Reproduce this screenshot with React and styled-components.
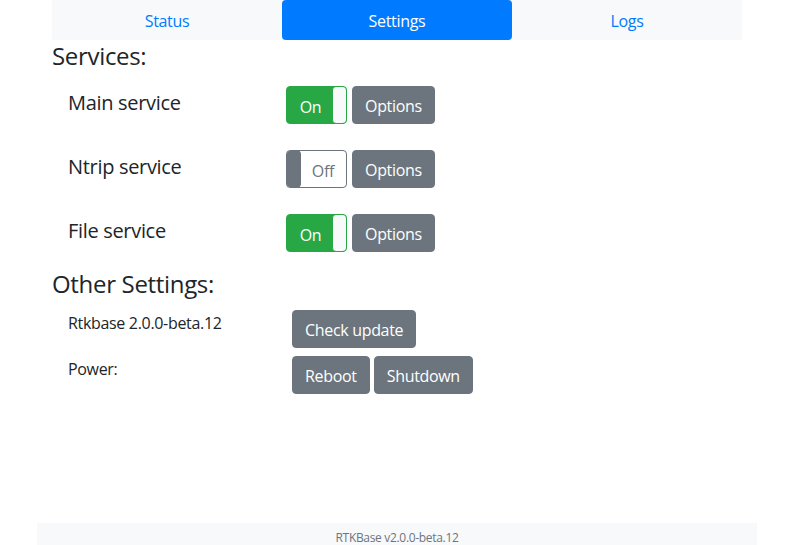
import React from "react";
import styled, { createGlobalStyle, css } from "styled-components";

const Global = createGlobalStyle`
  html, body { margin: 0; padding: 0; overflow: hidden; }
  body {
    font-family: "Segoe UI", "Open Sans", "Noto Sans", sans-serif;
    font-size: 16px;
    line-height: 1.5;
    letter-spacing: -0.02em;
    color: #212529;
    background: #fff;
  }
  * { box-sizing: border-box; }
`;

const Page = styled.div`
  height: 545px;
  display: flex;
  flex-direction: column;
  align-items: center;
`;

const Container = styled.div`
  width: 720px;
  padding: 0 15px;
  flex: 1;
`;

const Nav = styled.nav`
  display: flex;
  background: #f8f9fa;
`;

const NavLink = styled.a`
  flex: 1;
  text-align: center;
  padding: 9px 16px 7px;
  line-height: 24px;
  border-radius: 4px;
  color: ${(p) => (p.$active ? "#fff" : "#007bff")};
  background: ${(p) => (p.$active ? "#007bff" : "transparent")};
  cursor: pointer;
`;

const H4 = styled.h4`
  font-size: 24px;
  font-weight: 400;
  line-height: 1.2;
  padding-top: 2px;
  margin: ${(p) => p.$mt || 0}px 0 6px 0;
`;

const Services = styled.div`
  padding-top: 9px;
`;

const ServiceRow = styled.div`
  display: flex;
  align-items: flex-start;
  margin-top: ${(p) => p.$mt}px;
`;

const ServiceLabel = styled.h5`
  width: 218px;
  margin: 5px 0 0 16px;
  font-size: 20px;
  font-weight: 400;
  line-height: 1.2;
`;

const Btn = styled.button`
  font-family: inherit;
  font-size: 16px;
  letter-spacing: -0.02em;
  line-height: 24px;
  padding: 7px 12px 5px;
  border: 1px solid #6c757d;
  background: #6c757d;
  color: #fff;
  border-radius: 4px;
  cursor: pointer;
`;

const Toggle = styled.div`
  position: relative;
  width: 61px;
  height: 38px;
  border-radius: 4px;
  margin-right: 5px;
  overflow: hidden;
  font-size: 16px;
  line-height: 36px;
  ${(p) =>
    p.$on
      ? css`
          background: #28a745;
          border: 1px solid #28a745;
          color: #fff;
        `
      : css`
          background: #fff;
          border: 1px solid #6c757d;
          color: #6c757d;
        `}
`;

const ToggleText = styled.span`
  position: absolute;
  top: 2px;
  ${(p) => (p.$on ? "left: 0; right: 12px;" : "left: 13px; right: 0;")}
  text-align: center;
`;

const Handle = styled.span`
  position: absolute;
  top: -1px;
  bottom: -1px;
  width: 15px;
  border-radius: 4px;
  ${(p) =>
    p.$on
      ? css`
          right: -1px;
          background: #f8f9fa;
          border: 1px solid #28a745;
        `
      : css`
          left: -1px;
          background: #6c757d;
          border: 1px solid #6c757d;
        `}
`;

const OtherRow = styled.div`
  display: flex;
  align-items: flex-start;
  margin-top: ${(p) => p.$mt}px;
`;

const OtherLabel = styled.div`
  width: 224px;
  margin: 1px 0 0 16px;
  font-size: 16px;
  line-height: 24px;
`;

const BtnGroup = styled.div`
  display: flex;
  gap: 4px;
`;

const Footer = styled.footer`
  width: 720px;
  height: 22px;
  background: #f8f9fa;
  text-align: center;
  font-size: 12px;
  line-height: 18px;
  padding-top: 6px;
  color: #6c757d;
`;

function ServiceToggle({ on }) {
  return (
    <Toggle $on={on}>
      <ToggleText $on={on}>{on ? "On" : "Off"}</ToggleText>
      <Handle $on={on} />
    </Toggle>
  );
}

export default function App() {
  const services = [
    ["Main service", true],
    ["Ntrip service", false],
    ["File service", true],
  ];
  return (
    <>
      <Global />
      <Page>
        <Container>
          <Nav>
            <NavLink>Status</NavLink>
            <NavLink $active>Settings</NavLink>
            <NavLink>Logs</NavLink>
          </Nav>
          <H4>Services:</H4>
          <Services>
            {services.map(([name, on], i) => (
              <ServiceRow key={name} $mt={i === 0 ? 0 : 26}>
                <ServiceLabel>{name}</ServiceLabel>
                <ServiceToggle on={on} />
                <Btn>Options</Btn>
              </ServiceRow>
            ))}
          </Services>
          <H4 $mt={16}>Other Settings:</H4>
          <OtherRow $mt={11}>
            <OtherLabel>Rtkbase 2.0.0-beta.12</OtherLabel>
            <Btn>Check update</Btn>
          </OtherRow>
          <OtherRow $mt={8}>
            <OtherLabel>Power:</OtherLabel>
            <BtnGroup>
              <Btn>Reboot</Btn>
              <Btn>Shutdown</Btn>
            </BtnGroup>
          </OtherRow>
        </Container>
        <Footer>RTKBase v2.0.0-beta.12</Footer>
      </Page>
    </>
  );
}
